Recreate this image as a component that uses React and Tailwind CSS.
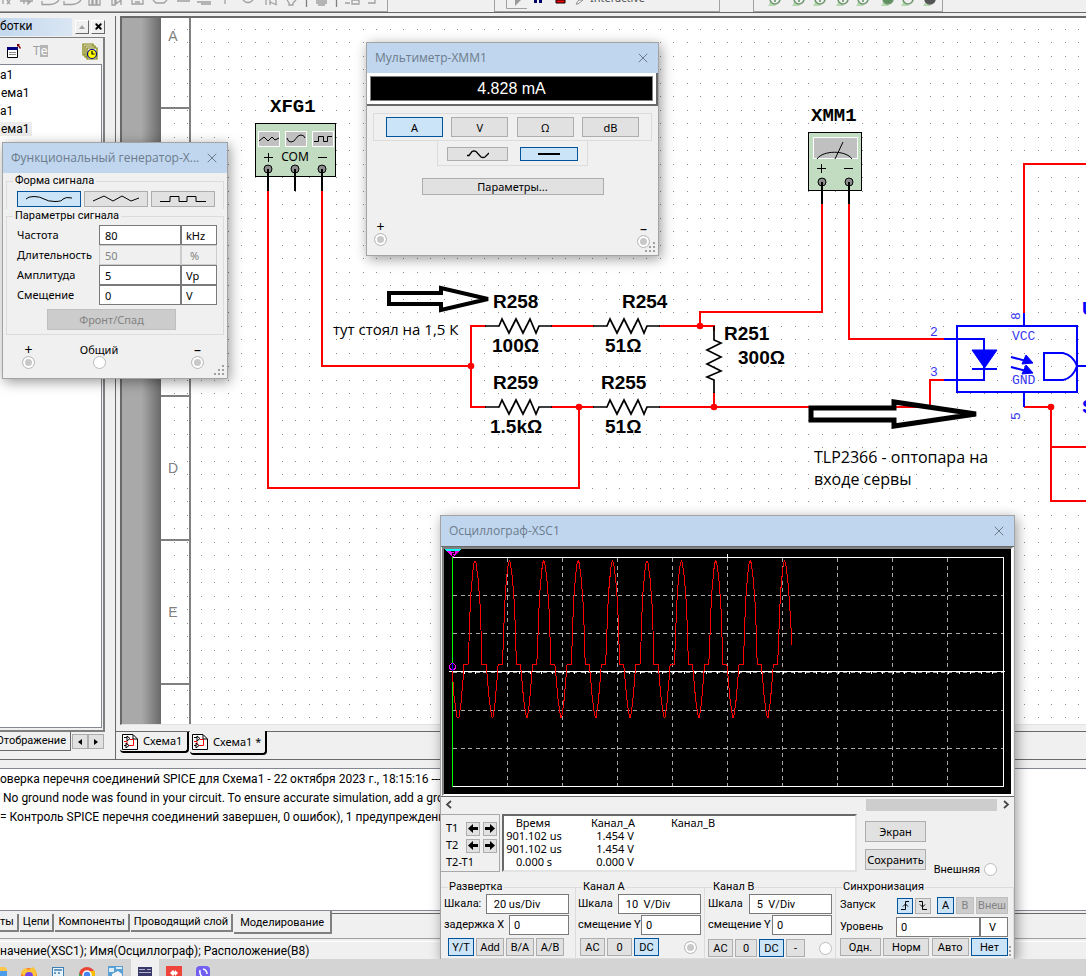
import React from "react";
import { X } from "lucide-react";

const PERIOD = 34.4;
const FIRST_PEAK = 475;

// one period of the signal, measured from its peak
const shape = [
  [-11, 664], [-7, 664], [-6, 642], [-5, 612], [-4, 592], [-2, 570], [-1, 563], [0, 561],
  [1, 563], [3, 578], [5, 604], [6, 630], [7, 664], [11, 664], [12, 674], [14, 697],
  [16, 712], [17, 717], [18, 717], [20, 703], [22, 680], [23, 666],
];

const wave = () => {
  const points = [[452, 668], [454, 696], [456, 710], [457, 717], [459, 717], [461, 703], [463, 680]];
  for (let i = 0; i < 9; i++) {
    shape.forEach(([x, y]) => points.push([FIRST_PEAK + i * PERIOD + x, y]));
  }
  shape.slice(0, 11).forEach(([x, y]) => points.push([FIRST_PEAK + 9 * PERIOD + x, y]));
  points.push([792, 645]);
  return points.map((p) => p.join(",")).join(" ");
};

const Button = ({ active, disabled, className = "", children, ...rest }) => (
  <button
    type="button"
    disabled={disabled}
    className={`flex items-center justify-center border leading-none whitespace-nowrap ${
      active
        ? "border-[#00549c] bg-[#cce4f7]"
        : disabled
        ? "border-[#bfbfbf] bg-[#cccccc] text-[#838383]"
        : "border-[#adadad] bg-[#e1e1e1]"
    } ${className}`}
    {...rest}
  >
    {children}
  </button>
);

const Terminal = ({ label, on, className = "" }) => (
  <label className={`flex flex-col items-center leading-3 ${className}`}>
    {label}
    <input
      type="radio"
      defaultChecked={on}
      className="size-[13px] appearance-none rounded-full border border-[#bcbcbc] bg-white checked:bg-[#c8c8c8] checked:shadow-[inset_0_0_0_2px_white]"
    />
  </label>
);

const Grip = () => (
  <svg className="absolute right-0.5 bottom-0.5 size-[11px]" fill="#a0a0a0">
    <path d="M8 0h2v2h-2zM4 4h2v2h-2zM8 4h2v2h-2zM0 8h2v2h-2zM4 8h2v2h-2zM8 8h2v2h-2z" />
  </svg>
);

const Window = ({ title, className = "", children }) => (
  <section
    className={`absolute border border-[#a3a3a3] bg-[#f0f0f0] text-[11px] shadow-[2px_3px_12px_rgba(0,0,0,0.4)] ${className}`}
  >
    <Grip />
    <header className="flex h-[30px] items-center justify-between bg-[#bfd6ee] pr-[7px] pl-2 font-['Open_Sans','Noto_Sans',sans-serif] text-xs text-[#6d7b8b]">
      <h2>{title}</h2>
      <button type="button" aria-label="Close">
        <X className="size-4" strokeWidth={1.5} />
      </button>
    </header>
    {children}
  </section>
);

const genRows = [
  { label: "Частота", value: "80", unit: "kHz" },
  { label: "Длительность", value: "50", unit: "%", disabled: true },
  { label: "Амплитуда", value: "5", unit: "Vp" },
  { label: "Смещение", value: "0", unit: "V" },
];

const Generator = () => (
  <Window title="Функциональный генератор-X..." className="top-[142px] left-[2px] w-[226px]">
    <div className="px-[3px] pt-px">
      <fieldset className="border border-b-0 border-[#dcdcdc] pt-[3px] pr-2 pb-0.5 pl-[10px]">
        <legend className="-ml-1 px-0.5 font-['Roboto',sans-serif] leading-[14px]">Форма сигнала</legend>
        <div className="flex justify-between">
          <Button active aria-label="Sine" className="h-4 w-16">
            <svg width="46" height="8" fill="none" stroke="#000">
              <path d="M0 4Q2 1.500 8 1.500Q14 1.500 18 4T29 6.500T37 4Q40 1.500 46 3" />
            </svg>
          </Button>
          <Button aria-label="Triangle" className="h-4 w-16">
            <svg width="46" height="8" fill="none" stroke="#000">
              <path d="M0 6L11 1L20 6L29 1L38 6L46 3" />
            </svg>
          </Button>
          <Button aria-label="Square" className="h-4 w-16">
            <svg width="46" height="8" fill="none" stroke="#000">
              <path d="M0 6.500H10V1.500H19V6.500H27V1.500H36V6.500H46" />
            </svg>
          </Button>
        </div>
      </fieldset>
      <fieldset className="border border-[#dcdcdc] pt-0.5 pr-1.5 pb-1 pl-[10px]">
        <legend className="-ml-1 px-0.5 font-['Roboto',sans-serif] leading-[14px]">Параметры сигнала</legend>
        {genRows.map((row) => (
          <div key={row.label} className={`flex h-5 items-center ${row.disabled ? "text-[#838383]" : ""}`}>
            <label htmlFor={row.label} className="flex-1 text-black">
              {row.label}
            </label>
            <input
              id={row.label}
              defaultValue={row.value}
              disabled={row.disabled}
              className="h-5 w-[82px] border border-[#7a7a7a] bg-white px-[5px] disabled:border-[#cccccc] disabled:bg-[#f0f0f0]"
            />
            <input
              aria-label={`${row.label} unit`}
              defaultValue={row.unit}
              disabled={row.disabled}
              className="h-5 w-9 border border-[#7a7a7a] bg-white px-1 disabled:border-[#cccccc] disabled:bg-[#f0f0f0] disabled:px-2"
            />
          </div>
        ))}
        <Button disabled className="mt-1 ml-[30px] h-[21px] w-[129px]">
          Фронт/Спад
        </Button>
      </fieldset>
      <div className="flex h-[43px] items-center justify-between px-4">
        <Terminal label="+" on className="text-sm" />
        <Terminal label="Общий" className="mr-7" />
        <Terminal label="–" on className="mr-1 text-sm" />
      </div>
    </div>
  </Window>
);

const Multimeter = () => (
  <Window title="Мультиметр-XMM1" className="top-[42px] left-[366px] w-[293px]">
    <div className="border-r-2 border-b-2 border-[#696969] bg-white p-[3px]">
      <output className="block h-[25px] border border-[#808080] bg-black text-center font-['Liberation_Sans',sans-serif] text-base leading-[23px] text-white">
        4.828 mA
      </output>
    </div>
    <div className="px-1.5 pt-[7px]">
      <div className="flex justify-between border border-[#dcdcdc] px-3 py-[3px]">
        <Button active className="h-5 w-[57px]">A</Button>
        <Button className="h-5 w-[57px]">V</Button>
        <Button className="h-5 w-[57px]">Ω</Button>
        <Button className="h-5 w-[57px]">dB</Button>
      </div>
      <div className="mx-auto flex w-[151px] justify-between border border-t-0 border-[#dcdcdc] px-[9px] pt-1.5 pb-1">
        <Button aria-label="AC" className="h-[14px] w-[61px]">
          <svg width="22" height="9" fill="none" stroke="#000" strokeWidth="1.300">
            <path d="M0 5.500H2L5 1.500Q7 0.500 9 1.500L14 7Q16 8 18 7L20 5L22 3" />
          </svg>
        </Button>
        <Button active aria-label="DC" className="h-[14px] w-[58px]">
          <svg width="22" height="4">
            <path d="M0 1h22v2H0z" />
          </svg>
        </Button>
      </div>
      <Button className="mx-auto mt-3 h-[17px] w-[182px]">Параметры...</Button>
    </div>
    <div className="mt-[26px] flex h-[34px] items-start justify-between pr-2 pl-[7px]">
      <Terminal label="+" on className="text-sm" />
      <Terminal label="–" on className="mt-0.5 text-sm" />
    </div>
  </Window>
);

const readings = [
  ["901.102 us", "1.454 V"],
  ["901.102 us", "1.454 V"],
  ["0.000 s", "0.000 V"],
];

const Field = ({ id, label, value, wide }) => (
  <div className="mb-px flex h-5 items-center justify-between">
    <label htmlFor={id} className="whitespace-nowrap">{label}</label>
    <input
      id={id}
      defaultValue={value}
      className={`h-5 border border-[#7a7a7a] bg-white px-1 ${wide ? "w-[83px]" : "w-[60px]"}`}
    />
  </div>
);

const ScopePlot = () => (
  <svg
    viewBox="444 549 567 245"
    className="block w-full border-2 border-t-[#808080] border-r-white border-b-white border-l-[#808080] bg-black"
    fill="none"
    shapeRendering="crispEdges"
  >
    <g stroke="#a8a8a8" strokeDasharray="4 3.500">
      {[1, 2, 3, 4, 5, 6, 7, 8, 9].map((n) => (
        <path key={n} d={`M${452.5 + n * 55} 558V786`} />
      ))}
      {[595.5, 633.5, 672.5, 710.5, 748.5].map((y) => (
        <path key={y} d={`M453 ${y}H1003`} />
      ))}
    </g>
    <path d="M452 557.500H1003.500V786.500H452M449 671.500H1005M727.500 554V558" stroke="#fff" />
    <path d="M463.500 673H1004" stroke="#fff" strokeWidth="2" strokeDasharray="1 10" />
    <path d="M452.500 557V787" stroke="#00ff00" />
    <polyline points={wave()} stroke="#f00" />
    <path d="M444 549H461L453 557Z" fill="#f0f" />
    <path d="M444 549H461L459 551H446Z" fill="#0ff" />
    <path d="M451 551H454V553H452V555H454" stroke="#000" />
    <circle cx="452.500" cy="666.500" r="3" stroke="#f0f" />
    <path d="M452.500 663V671" stroke="#00f" />
  </svg>
);

const StepButtons = () => (
  <span className="flex gap-[3px]">
    <Button aria-label="Left" className="size-[14px]">
      <svg width="10" height="9"><path d="M0 4.500L5 0V3H10V6H5V9Z" /></svg>
    </Button>
    <Button aria-label="Right" className="size-[14px]">
      <svg width="10" height="9"><path d="M10 4.500L5 0V3H0V6H5V9Z" /></svg>
    </Button>
  </span>
);

const group = "min-w-0 border border-l-0 border-[#dcdcdc] pb-px font-['Roboto','Noto_Sans',sans-serif]";

const Oscilloscope = () => (
  <Window title="Осциллограф-XSC1" className="top-[515px] left-[440px] w-[575px]">
    <div className="border-t border-b border-[#696969] px-px">
      <ScopePlot />
    </div>
    <div className="flex h-[15px] items-center justify-between px-1">
      <svg width="8" height="9" fill="none" stroke="#444" strokeWidth="1.700"><path d="M6 1L2 4.500L6 8" /></svg>
      <div className="mr-[5px] ml-auto h-3 w-[131px] bg-[#cdcdcd]" />
      <svg width="8" height="9" fill="none" stroke="#444" strokeWidth="1.700"><path d="M2 1L6 4.500L2 8" /></svg>
    </div>
    <div className="flex h-[62px] items-stretch">
      <div className="my-0.5 w-[59px] space-y-0.5 border border-l-0 border-[#a8a8a8] pt-1.5 pr-0.5 pl-[5px]">
        <div className="flex h-[15px] items-center justify-between">T1<StepButtons /></div>
        <div className="flex h-[15px] items-center justify-between">T2<StepButtons /></div>
        <div className="leading-[14px]">T2-T1</div>
      </div>
      <div className="my-0.5 ml-0.5 flex-1 border-2 border-t-[#696969] border-r-[#e3e3e3] border-b-[#e3e3e3] border-l-[#696969] bg-white">
        <table className="table-fixed text-center leading-[13px]">
          <thead>
            <tr>
              <th className="w-[58px] p-0 font-normal">Время</th>
              <th className="w-[102px] p-0 font-normal">Канал_A</th>
              <th className="w-[58px] p-0 font-normal">Канал_B</th>
            </tr>
          </thead>
          <tbody>
            {readings.map(([time, a], i) => (
              <tr key={i}>
                <td className="p-0 pl-0.5 whitespace-nowrap">{time}</td>
                <td className="p-0 pl-1">{a}</td>
                <td className="p-0" />
              </tr>
            ))}
          </tbody>
        </table>
      </div>
      <div className="flex w-[157px] items-end justify-between pr-[17px] pl-2">
        <div className="space-y-[7px] pb-1">
          <Button className="h-[21px] w-[61px]">Экран</Button>
          <Button className="h-[21px] w-[61px]">Сохранить</Button>
        </div>
        <label className="-mb-1 flex items-center gap-1 font-['Roboto',sans-serif] whitespace-nowrap">
          Внешняя
          <input type="radio" className="size-[13px] appearance-none rounded-full border border-[#bcbcbc] bg-white" />
        </label>
      </div>
    </div>
    <div className="mt-1.5 flex">
      <fieldset className={`${group} w-[135px] pr-1.5 pl-[3px]`}>
        <legend className="ml-1 px-px leading-[14px]">Развертка</legend>
        <Field id="timebase" label="Шкала:" value=" 20 us/Div" wide />
        <Field id="delay" label="задержка X" value="0" />
        <div className="mt-[3px] flex gap-0.5 pl-1">
          <Button active className="h-[18px] w-[26px]">Y/T</Button>
          <Button className="h-[18px] w-7">Add</Button>
          <Button className="h-[18px] w-7">B/A</Button>
          <Button className="h-[18px] w-7">A/B</Button>
        </div>
      </fieldset>
      <fieldset className={`${group} w-[129px] pr-[3px] pl-0.5`}>
        <legend className="ml-1 px-px leading-[14px]">Канал A</legend>
        <Field id="scaleA" label="Шкала" value=" 10  V/Div" wide />
        <Field id="offsetA" label="смещение Y" value="0" />
        <div className="mt-[3px] flex items-center gap-0.5 pl-0.5">
          <Button className="h-[18px] w-[25px]">AC</Button>
          <Button className="h-[18px] w-[25px]">0</Button>
          <Button active className="h-[18px] w-[25px]">DC</Button>
          <input type="radio" aria-label="Канал A" defaultChecked className="mr-1 ml-auto size-[13px] appearance-none rounded-full border border-[#bcbcbc] bg-white checked:bg-[#c8c8c8] checked:shadow-[inset_0_0_0_2px_white]" />
        </div>
      </fieldset>
      <fieldset className={`${group} w-[131px] pr-[3px] pl-[3px]`}>
        <legend className="ml-1 px-px leading-[14px]">Канал B</legend>
        <Field id="scaleB" label="Шкала" value=" 5  V/Div" wide />
        <Field id="offsetB" label="смещение Y" value="0" />
        <div className="mt-1 flex items-center gap-0.5">
          <Button className="h-[18px] w-[25px]">AC</Button>
          <Button className="h-[18px] w-[22px]">0</Button>
          <Button active className="h-[18px] w-[25px]">DC</Button>
          <Button className="h-[18px] w-[19px]">-</Button>
          <input type="radio" aria-label="Канал B" className="ml-auto size-[13px] appearance-none rounded-full border border-[#bcbcbc] bg-white" />
        </div>
      </fieldset>
      <fieldset className={`${group} relative flex-1 pr-[5px] pl-1`}>
        <legend className="ml-0.5 px-px leading-[14px]">Синхронизация</legend>
        <div className="flex h-[23px] items-center gap-0.5">
          <span className="mr-auto">Запуск</span>
          <Button active aria-label="Rising edge" className="size-4">
            <svg width="10" height="11" fill="none" stroke="#000"><path d="M1 9.500H5.500V1.500H9M3 6.500L5.500 4L8 6.500" /></svg>
          </Button>
          <Button aria-label="Falling edge" className="mr-1 size-4">
            <svg width="10" height="11" fill="none" stroke="#000"><path d="M1 1.500H4.500V9.500H9M2 4.500L4.500 7L7 4.500" /></svg>
          </Button>
          <Button active className="h-[17px] w-[17px]">A</Button>
          <Button disabled className="h-[17px] w-[18px]">B</Button>
          <Button disabled className="h-[17px] w-8">Внеш</Button>
        </div>
        <div className="flex h-5 items-center">
          <label htmlFor="level" className="mr-auto">Уровень</label>
          <input id="level" defaultValue="0" className="h-5 w-[84px] border border-[#7a7a7a] bg-white px-1" />
          <input aria-label="Уровень unit" defaultValue="V" className="h-5 w-7 border border-[#7a7a7a] bg-white px-2" />
        </div>
        <div className="mt-px flex justify-between">
          <Button className="h-[18px] w-[41px]">Одн.</Button>
          <Button className="h-[18px] w-[46px]">Норм</Button>
          <Button className="h-[18px] w-[37px]">Авто</Button>
          <Button active className="h-[18px] w-[37px]">Нет</Button>
        </div>
      </fieldset>
    </div>
  </Window>
);

const Resistor = ({ x, y, vertical }) => (
  <path
    transform={`translate(${x} ${y})${vertical ? " rotate(90)" : ""}`}
    d="M0 0H14L17 -7L24 7L31 -7L38 7L45 -7L51 7L54 0H67"
    stroke="#000"
    strokeWidth="1.700"
    fill="none"
  />
);

const Pin = ({ x, y, length }) => (
  <g stroke="#000">
    <circle cx={x} cy={y} r="4" fill="#8c8c8c" />
    <path d={`M${x} ${y}v${length}`} strokeWidth="2" />
  </g>
);

const labels = [
  ["R258", 493, 308], ["R254", 622, 308], ["100Ω", 492, 352], ["51Ω", 605, 352],
  ["R259", 493, 389], ["R255", 601, 389], ["1.5kΩ", 490, 433], ["51Ω", 605, 433],
  ["R251", 724, 340], ["300Ω", 738, 364],
];

const nodes = [[471, 366], [700, 326], [579, 407], [714, 407], [1051, 407]];

const Schematic = () => (
  <svg className="block h-full w-full bg-white" fill="none">
    <defs>
      <pattern id="dots" x="174" y="29" width="27" height="27" patternUnits="userSpaceOnUse">
        <path d="M0 0h1v1H0zM13 0h1v1h-1zM0 13h1v1H0zM13 13h1v1h-1z" fill="#8a8a8a" />
      </pattern>
      <linearGradient id="edge">
        <stop offset="0.500" stopColor="#a9a9a9" />
        <stop offset="1" stopColor="#6a6a6a" />
      </linearGradient>
    </defs>
    <g transform="translate(-122 -18)">
      <rect x="174" y="20" width="3000" height="2000" fill="url(#dots)" />
      <rect x="122" y="18" width="39" height="2000" fill="url(#edge)" />
      <path d="M190 18V2000M161 108H190M161 252H190M161 396H190M161 540H190M161 684H190" stroke="#808080" strokeWidth="2" />
      <g className="fill-[#808080] font-['Liberation_Sans',sans-serif] text-[14px]" textAnchor="middle">
        <text x="173" y="41">A</text>
        <text x="173" y="473">D</text>
        <text x="173" y="617">E</text>
      </g>

      <g stroke="#f00" strokeWidth="2">
        <path d="M268 190V488H579V407M322 190V366H471M486 326H471V407H486" />
        <path d="M551 326H594M551 407H594M659 326H714V331M714 392V407M659 407H930V380H944" />
        <path d="M700 326V312H822V203M849 203V339H944" />
        <path d="M1024 314V164H3000M1024 407H1051V501H3000M1051 447H3000" />
      </g>
      <Resistor x={485} y={326} />
      <Resistor x={593} y={326} />
      <Resistor x={485} y={407} />
      <Resistor x={593} y={407} />
      <Resistor x={714} y={326} vertical />
      {nodes.map(([x, y]) => (
        <circle key={`${x}-${y}`} cx={x} cy={y} r="3.300" fill="#f00" />
      ))}

      <g className="fill-black font-['Liberation_Sans',sans-serif] text-[19px] font-bold">
        {labels.map(([text, x, y]) => (
          <text key={`${x}-${y}`} x={x} y={y}>{text}</text>
        ))}
      </g>

      <g className="fill-black font-['Liberation_Mono',monospace] text-[19px] font-bold">
        <text x="270" y="112">XFG1</text>
        <text x="811" y="121">XMM1</text>
      </g>

      {/* function generator */}
      <rect x="255.500" y="123.500" width="80" height="53" fill="#c1dcc1" stroke="#000" />
      <g fill="#c0c0c0" stroke="#fff">
        <rect x="258.500" y="131.500" width="21" height="15" />
        <rect x="285.500" y="131.500" width="21" height="15" />
        <rect x="312.500" y="131.500" width="21" height="15" />
      </g>
      <g stroke="#000">
        <path d="M259 141L264 137L268 141L272 137L275 140L279 138" />
        <path d="M287 138Q288 142 291 142Q294 142 296 138.500T301 135Q304 135 305 138" />
        <path d="M314 141.500H318.500V136.500H323.500V141.500H327.500V136.500H332" />
        <path d="M264 157.500H273M268.500 153V162M318 157.500H327" />
      </g>
      <text x="295" y="161" textAnchor="middle" className="fill-black font-['Noto_Sans',sans-serif] text-[12px]">COM</text>
      <Pin x={268} y={169} length={22} />
      <Pin x={295} y={169} length={22} />
      <Pin x={322} y={169} length={22} />

      {/* multimeter */}
      <rect x="808.500" y="132.500" width="53" height="58" fill="#c1dcc1" stroke="#000" />
      <rect x="813.500" y="137.500" width="44" height="21" fill="#c0c0c0" stroke="#fff" />
      <path d="M817 159C823 150 846 150 852 159M835 159L843 142M817 168.500H826M821.500 164V173M844 168.500H853" stroke="#000" />
      <Pin x={822} y={182} length={22} />
      <Pin x={849} y={182} length={22} />

      {/* optocoupler */}
      <g stroke="#00f" strokeWidth="2">
        <rect x="957" y="326" width="120" height="66" />
        <path d="M944 339H984V380H944M972 369H997M1024 313V326M1024 392V407M1077 366H1090" />
        <path d="M1044 353H1063Q1073 355 1077 366Q1073 378 1063 380H1044Z" />
        <path d="M1011 357L1030 362M1011 367L1030 372" />
        <path d="M972 350H997L984.500 368ZM1026 355L1033 363L1022 364ZM1026 365L1033 373L1022 374Z" fill="#00f" strokeWidth="1" />
      </g>
      <g className="fill-[#3838f0] font-['Liberation_Mono',monospace] text-[13px]">
        <text x="1012" y="340">VCC</text>
        <text x="1012" y="384">GND</text>
        <text x="930" y="336">2</text>
        <text x="930" y="376">3</text>
        <text transform="translate(1020 320) rotate(-90)">8</text>
        <text transform="translate(1020 420) rotate(-90)">5</text>
      </g>
      <g className="fill-[#00f] font-['Liberation_Sans',sans-serif] text-[19px] font-bold">
        <text x="1082" y="315">U</text>
        <text x="1082" y="413">S</text>
      </g>

      {/* notes */}
      <g stroke="#000" strokeWidth="4">
        <path d="M389 293H441V288L488 299L441 310V304H389Z" />
        <path d="M811 408H894V402L976 414L894 426V420H811Z" strokeWidth="5" />
      </g>
      <g className="fill-black font-['Open_Sans','Noto_Sans',sans-serif]">
        <text x="333" y="335" className="text-[15px]">тут стоял на 1,5 К</text>
        <text x="814" y="463" className="text-[16px]">TLP2366 - оптопара на</text>
        <text x="814" y="485" className="text-[16px]">входе сервы</text>
      </g>
    </g>
  </svg>
);

const TopBar = () => (
  <header className="flex h-[13px] shrink-0 items-start overflow-hidden border-b border-[#696969]">
    <svg className="h-3 w-[388px] border-r border-b border-[#a0a0a0]" fill="none" stroke="#a0a0a0" strokeWidth="1.300">
      <path d="M3 0V4M7 0L10 4M7 4L10 0M20 1H33M24 0V4M28 0V4L31 1M42 1V4.500H50Q56 4 59 0M64 1V4.500H72Q78 4 81 0" />
      <path d="M89 0V5H92V0M93 0V5H96V0M97 0V5H100V0M112 0V5H115V0M116 0V4L121 0M121 0V5" />
      <path d="M132 0V4H143V0M135 2H140M153 0L156 3H164L167 0M177 1H190M197 2H211M201 4H211M225 0V4M243 0Q248 5 253 0" />
      <path d="M266 0V5M270 0V5M270 2L277 5M276 0V5M287 0L289 3V5H293V3L296 0M316 1H327M316 3H327M318 5H325M345 3H350M352 0H359V4H352ZM368 3H375V0" />
      <path d="M306.500 0V7M336.500 0V7" stroke="#808080" />
    </svg>
    <div className="ml-[106px] flex h-3 w-[226px] items-start border-r border-b border-l border-[#a0a0a0] pl-[11px]">
      <svg width="84" height="9">
        <path d="M0.500 0V8.500H21" stroke="#a0a0a0" fill="none" />
        <path d="M9 0H15L9 6Z" fill="#999" />
        <path d="M28 0h3v3h-3zM33 0h3v3h-3z" fill="#006" />
        <path d="M50 0h9v3h-9z" fill="#f00" stroke="#000" />
        <path d="M70 4L73 0H77L72 4Z" stroke="#888" fill="#fff" />
      </svg>
      <span className="-mt-[10px] text-[11px] leading-4 text-[#555]">Interactive</span>
    </div>
    <svg className="ml-[33px] h-3 w-[190px] border-r border-b border-l border-[#a0a0a0]" fill="none" stroke="#5f8f5f" strokeWidth="1.500">
      {[20, 44, 65, 88, 108, 133, 153, 175].map((x, i) => (
        <g key={x}>
          <path d={`M${x - 6} 6L${x - 3} 1L${x + 2} 6Z`} fill="#b5d8ae" stroke="none" />
          <circle cx={x + 1} cy="-1" r="5" fill={i === 7 ? "#555" : i === 5 ? "#5f8f5f" : "#f0f0f0"} stroke={i === 7 ? "#555" : "#6f966f"} />
          {i < 5 && <path d={`M${x + 1} 0v2`} />}
        </g>
      ))}
    </svg>
  </header>
);

const sheets = ["а1", "ема1", "а1", "ема1"];

const ToolPanel = () => (
  <aside className="flex w-[116px] shrink-0 flex-col border-r border-[#696969] pr-2.5 pb-1">
    <div className="flex h-[21px] shrink-0 items-center">
      <h2 className="mr-[3px] h-[18px] w-[72px] bg-linear-to-r from-[#c3d8ee] to-[#dae6f3] font-['Roboto',sans-serif] text-xs leading-4">ботки</h2>
      <div className="flex gap-0.5">
        <button type="button" aria-label="Pin" className="flex h-[14px] w-[14px] items-center justify-center border border-white border-r-[#696969] border-b-[#696969]">
          <svg width="6" height="4" fill="#a0a0a0"><path d="M0 4L3 0L6 4Z" /></svg>
        </button>
        <button type="button" aria-label="Close panel" className="flex h-[14px] w-[14px] items-center justify-center border border-white border-r-[#696969] border-b-[#696969]">
          <X className="size-[9px]" strokeWidth={5} />
        </button>
      </div>
    </div>
    <div className="flex min-h-0 flex-1 flex-col border-t border-r-2 border-b-2 border-[#808080] pr-px pb-0.5">
      <div className="flex h-[26px] shrink-0 items-center pr-1 pl-[7px]">
        <svg width="15" height="15" fill="none">
          <path d="M0.500 5V13.500H10.500V5" fill="#fff" stroke="#000" />
          <path d="M0 3h11v3H0z" fill="#000080" />
          <path d="M2 8.500H9M2 10.500H9" stroke="#888" />
          <path d="M10 0h3l-1 1l2 3l-1 1l-2-3l-1 1z" fill="#800000" />
        </svg>
        <span className="ml-[11px] flex text-xs leading-3 text-[#a0a0a0]">
          T<span className="bg-[#b5b5b5] px-px text-white">e</span>
        </span>
        <svg className="ml-auto" width="16" height="17" fill="#f0f0f0" stroke="#808000" strokeWidth="1.200">
          <path d="M1 1H11V12H1Z" />
          <path d="M3 3H13V14H3Z" />
          <path d="M5 5H15V16H5Z" />
          <circle cx="10" cy="11" r="4.500" fill="#ff0" stroke="#000080" />
          <path d="M10 8V11H12.500" stroke="#000" fill="none" />
        </svg>
      </div>
      <ul className="flex-1 border border-l-0 border-[#828790] bg-white pt-px font-['Roboto',sans-serif] text-xs leading-[18px]">
        {sheets.map((sheet, i) => (
          <li key={i}>
            <span className={`${i % 2 ? "pl-px" : ""} pr-0.5 ${i === 3 ? "bg-[#ececec]" : ""}`}>{sheet}</span>
          </li>
        ))}
      </ul>
    </div>
    <div className="flex h-[23px] shrink-0">
      <button type="button" className="flex h-[19px] w-[71px] items-center justify-end border-r border-b border-[#696969] pr-1 font-['Roboto',sans-serif] text-[11px]">
        Отображение
      </button>
      <div className="mt-0.5 ml-px flex">
        <Button aria-label="Previous" className="h-[15px] w-4"><svg width="4" height="6"><path d="M4 0V6L0 3Z" /></svg></Button>
        <Button aria-label="Next" className="h-[15px] w-4"><svg width="4" height="6"><path d="M0 0V6L4 3Z" /></svg></Button>
      </div>
    </div>
  </aside>
);

const SheetIcon = () => (
  <svg width="16" height="16" fill="none">
    <path d="M0.500 0.500H11L15.500 5V15.500H0.500Z" fill="#fff" stroke="#000" />
    <path d="M8 5.500H11.500V11.500H7M2 7.500H5V11" stroke="#f00" />
    <path d="M2 3.500H5M2 11.500H4M5 2L8 4.500L5 7ZM4 9L7 11.500L4 14ZM11 1V5H15" stroke="#000" />
  </svg>
);

const TaskBar = () => (
  <footer className="relative z-10 flex h-[17px] shrink-0 items-start overflow-hidden bg-[#d4d4d4]">
    <svg width="230" height="17">
      <path d="M0 8H5L7 10V17H0Z" fill="#fbc64a" />
      <path d="M0 12H7V17H0Z" fill="#4a9be8" />
      <circle cx="29" cy="17" r="8" fill="#ff7a1a" />
      <path d="M21 14Q24 7 28 11L33 8Q38 12 36 17H32Q30 11 24 17Z" fill="#ffc43a" />
      <circle cx="29" cy="17" r="4" fill="#7542e5" />
      <rect x="52.500" y="8.500" width="11" height="12" fill="#e9f3fb" stroke="#3c7fb5" />
      <path d="M54 11H62M54 14H56M58 14H60" stroke="#3c7fb5" strokeWidth="1.500" />
      <circle cx="87" cy="16" r="8" fill="#ea4335" />
      <path d="M79 14L85 20H79Z" fill="#34a853" />
      <path d="M88 12H95V20H90Z" fill="#fbbc04" />
      <circle cx="87" cy="16" r="4" fill="#4285f4" stroke="#fff" strokeWidth="1.500" />
      <rect x="108" y="7" width="15" height="11" fill="#5a9fd4" />
      <path d="M109 9H114V13H109ZM116 8H122V10H116Z" fill="#d9ecf8" />
      <path d="M112 15L118 12L122 15V17H112Z" fill="#f3f3f3" />
      <rect x="131" width="28" height="17" fill="#f0f0f0" />
      <rect x="138" y="8" width="14" height="10" fill="#38386b" />
      <path d="M139 10.500H145M147 10.500H151M139 13.500H151" stroke="#b4b4d0" />
      <rect x="166" y="7" width="16" height="16" fill="#ef443b" />
      <path d="M170 14L173 11L176 14L173 17ZM175 11L178 14L175 17" fill="#fff" />
      <rect x="196" y="7" width="14" height="16" rx="4" fill="#7360f2" />
      <path d="M200 11Q199 17 205 20M203 10Q207 11 207 15" stroke="#fff" strokeWidth="1.500" fill="none" />
    </svg>
  </footer>
);

const bottomTabs = ["ты", "Цепи", "Компоненты", "Проводящий слой"];

const App = () => {
  return (
    <div className="relative flex h-screen flex-col overflow-hidden bg-[#f0f0f0] font-['Noto_Sans',sans-serif] text-black">
      <TopBar />
      <div className="flex min-h-0 flex-1">
        <div className="flex pt-[3px]">
          <ToolPanel />
        </div>
        <main className="flex min-w-0 flex-1 flex-col">
          <div className="mt-[3px] mb-1.5 ml-1 min-h-0 flex-1 border-t-2 border-b border-l-2 border-[#696969] border-b-[#e3e3e3]">
            <Schematic />
          </div>
          <nav className="flex h-7 shrink-0 items-start border-t border-[#696969] pl-1 text-[11px]">
            <button type="button" className="flex h-[21px] w-[69px] items-center gap-[5px] rounded-b border-r-2 border-b-2 border-black pl-0.5">
              <SheetIcon />
              Схема1
            </button>
            <button type="button" className="-mt-px ml-px flex h-6 w-[77px] items-center gap-[5px] rounded-b border-r-2 border-b-2 border-black bg-[#f0f0f0] pl-0.5">
              <SheetIcon />
              Схема1 *
            </button>
          </nav>
        </main>
      </div>
      <section className="flex h-[152px] shrink-0 flex-col border-t border-[#696969] pt-2">
        <div className="flex-1 overflow-hidden border-y border-[#828790] bg-white pt-px font-['Roboto','Noto_Sans',sans-serif] text-xs leading-[19px] whitespace-pre">
          <p>оверка перечня соединений SPICE для Схема1 - 22 октября 2023 г., 18:15:16 -----</p>
          <p className="pl-[3px]">No ground node was found in your circuit. To ensure accurate simulation, add a gro</p>
          <p>= Контроль SPICE перечня соединений завершен, 0 ошибок), 1 предупреждений</p>
        </div>
      </section>
      <nav className="flex h-7 shrink-0 items-start border-b border-[#a0a0a0] font-['Roboto',sans-serif] text-[11px]">
        {bottomTabs.map((tab) => (
          <button
            key={tab}
            type="button"
            className="mt-[3px] mr-px h-[18px] border-r-2 border-b-2 border-[#808080] px-[3px] leading-4 whitespace-nowrap first:pl-0"
          >
            {tab}
          </button>
        ))}
        <button type="button" className="h-[23px] border-r-2 border-b-2 border-[#808080] px-1.5 pt-1">
          Моделирование
        </button>
        <div className="mt-0.5 flex-1 border-t border-[#696969]" />
      </nav>
      <p className="mt-0.5 h-[18px] shrink-0 border-t border-white font-['Roboto',sans-serif] text-xs leading-[18px] whitespace-nowrap">
        начение(XSC1); Имя(Осциллограф); Расположение(B8)
      </p>
      <TaskBar />

      <Multimeter />
      <Generator />
      <Oscilloscope />
    </div>
  );
};

export default App;
